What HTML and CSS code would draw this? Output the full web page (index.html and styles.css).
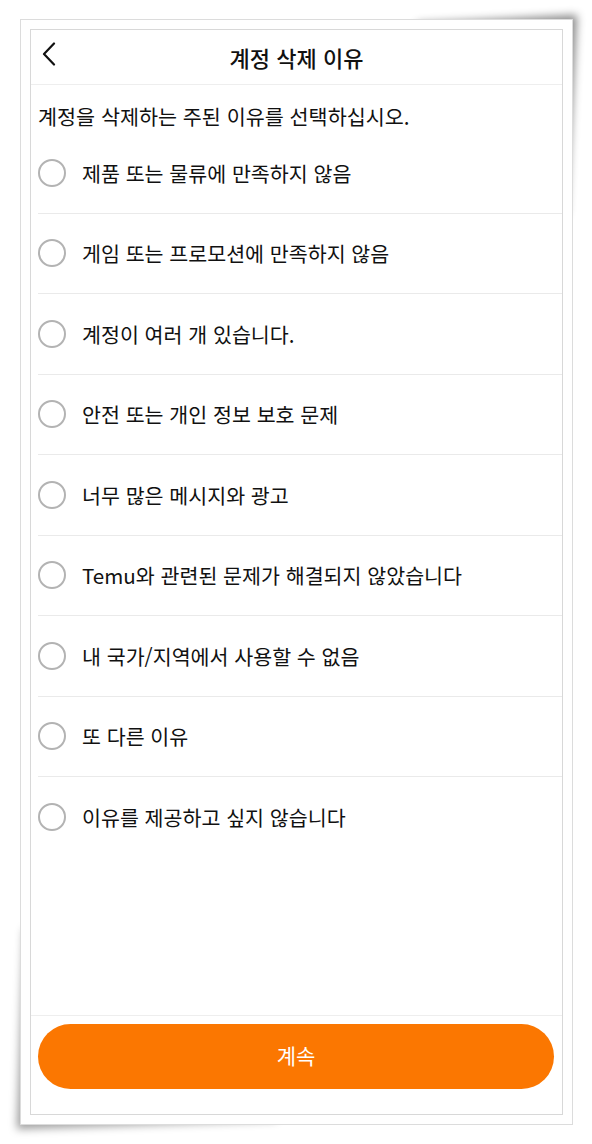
FILE: index.html
```html
<!DOCTYPE html>
<html lang="ko">
<head>
<meta charset="utf-8">
<link rel="stylesheet" href="styles.css">
</head>
<body>
<div class="sheet">
  <div class="screen">
    <header class="header">
      <svg class="back" width="14" height="24" viewBox="0 0 14 24"><path d="M12 1.5 L2 12 L12 22.5" fill="none" stroke="#111" stroke-width="2.2" stroke-linecap="round" stroke-linejoin="round"/></svg>
      <h1 class="title">계정 삭제 이유</h1>
    </header>
    <p class="subtitle">계정을 삭제하는 주된 이유를 선택하십시오.</p>
    <ul class="list">
      <li class="row"><span class="radio"></span><span class="label">제품 또는 물류에 만족하지 않음</span></li>
      <li class="row"><span class="radio"></span><span class="label">게임 또는 프로모션에 만족하지 않음</span></li>
      <li class="row"><span class="radio"></span><span class="label">계정이 여러 개 있습니다.</span></li>
      <li class="row"><span class="radio"></span><span class="label">안전 또는 개인 정보 보호 문제</span></li>
      <li class="row"><span class="radio"></span><span class="label">너무 많은 메시지와 광고</span></li>
      <li class="row"><span class="radio"></span><span class="label">Temu와 관련된 문제가 해결되지 않았습니다</span></li>
      <li class="row"><span class="radio"></span><span class="label">내 국가/지역에서 사용할 수 없음</span></li>
      <li class="row"><span class="radio"></span><span class="label">또 다른 이유</span></li>
      <li class="row last"><span class="radio"></span><span class="label">이유를 제공하고 싶지 않습니다</span></li>
    </ul>
    <footer class="footer">
      <button class="btn">계속</button>
    </footer>
  </div>
</div>
</body>
</html>
```

FILE: styles.css
```css
* { box-sizing: border-box; }
html { background: #fff; }
html, body { margin: 0; padding: 0; }
body {
  width: 592px;
  height: 1144px;
  font-family: "Noto Sans CJK KR", "Noto Sans", sans-serif;
  color: #111;
  padding: 19px 0 0 20px;
}
.sheet {
  position: relative;
  width: 553px;
  height: 1106px;
  border: 1px solid #dcdcdc;
  background: #fff;
  padding: 9px;
}
.sheet::before {
  content: "";
  position: absolute;
  right: 0;
  top: 0;
  width: 160px;
  height: 200px;
  box-shadow: 5px -5px 9px rgba(0,0,0,0.45);
  transform-origin: top right;
  transform: skew(-3deg, -3deg);
  z-index: -1;
}
.sheet::after {
  content: "";
  position: absolute;
  left: 0;
  bottom: 0;
  width: 260px;
  height: 200px;
  box-shadow: -4px 5px 8px rgba(0,0,0,0.38);
  transform-origin: bottom left;
  transform: skew(-2deg, -2deg);
  z-index: -1;
}
.screen {
  height: 100%;
  border: 1px solid #d8d8d8;
  display: flex;
  flex-direction: column;
  background: #fff;
}
.header {
  height: 55px;
  border-bottom: 1px solid #eeeeee;
  display: flex;
  align-items: center;
  justify-content: center;
  position: relative;
}
.back {
  position: absolute;
  left: 11px;
  top: 12px;
}
.title {
  margin: 0;
  font-size: 22px;
  font-weight: 500;
  line-height: 28px;
}
.subtitle {
  margin: 0;
  padding: 17px 0 3px 7px;
  font-size: 20.7px;
  line-height: 28px;
}
.list {
  list-style: none;
  margin: 0;
  padding: 0 0 0 7px;
  flex: 1;
}
.row {
  height: 80.5px;
  border-bottom: 1px solid #eaeaea;
  display: flex;
  align-items: center;
  gap: 16px;
}
.row.last { border-bottom: none; height: 80px; }
.radio {
  width: 28px;
  height: 28px;
  border: 2px solid #b3b3b3;
  border-radius: 50%;
  flex: none;
}
.label {
  font-size: 20.6px;
  line-height: 28px;
}
.footer {
  border-top: 1px solid #eeeeee;
  padding: 8px 8px 25px 7px;
}
.btn {
  display: block;
  width: 100%;
  height: 65px;
  padding: 0 0 4px;
  border: none;
  border-radius: 33px;
  background: #fb7701;
  color: #fff;
  font-family: "Noto Sans CJK KR", "Noto Sans", sans-serif;
  font-size: 21px;
  font-weight: 400;
}
```
